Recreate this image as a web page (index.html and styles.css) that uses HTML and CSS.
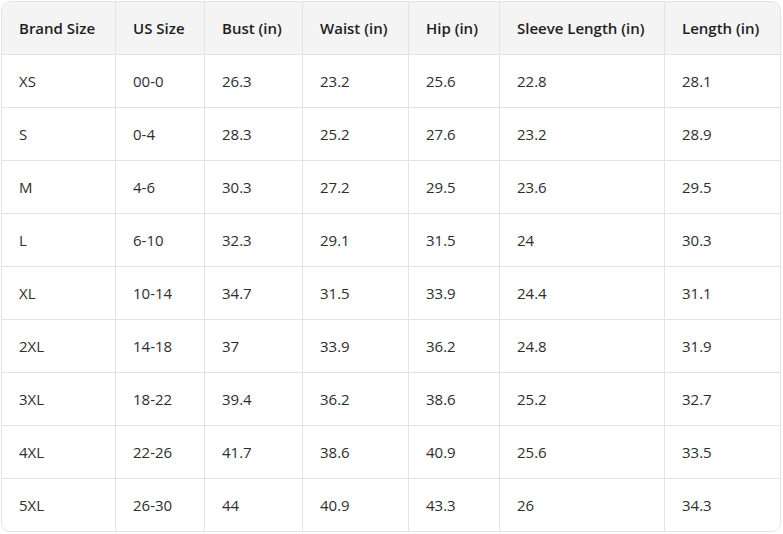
FILE: index.html
```html
<!DOCTYPE html>
<html>
<head>
<meta charset="utf-8">
<link rel="stylesheet" href="styles.css">
</head>
<body>
<div class="wrap">
<table class="size-table">
<colgroup>
<col class="c1"><col class="c2"><col class="c3"><col class="c4"><col class="c5"><col class="c6"><col class="c7">
</colgroup>
<thead>
<tr><th>Brand Size</th><th>US Size</th><th>Bust (in)</th><th>Waist (in)</th><th>Hip (in)</th><th>Sleeve Length (in)</th><th>Length (in)</th></tr>
</thead>
<tbody>
<tr><td>XS</td><td>00-0</td><td>26.3</td><td>23.2</td><td>25.6</td><td>22.8</td><td>28.1</td></tr>
<tr><td>S</td><td>0-4</td><td>28.3</td><td>25.2</td><td>27.6</td><td>23.2</td><td>28.9</td></tr>
<tr><td>M</td><td>4-6</td><td>30.3</td><td>27.2</td><td>29.5</td><td>23.6</td><td>29.5</td></tr>
<tr><td>L</td><td>6-10</td><td>32.3</td><td>29.1</td><td>31.5</td><td>24</td><td>30.3</td></tr>
<tr><td>XL</td><td>10-14</td><td>34.7</td><td>31.5</td><td>33.9</td><td>24.4</td><td>31.1</td></tr>
<tr><td>2XL</td><td>14-18</td><td>37</td><td>33.9</td><td>36.2</td><td>24.8</td><td>31.9</td></tr>
<tr><td>3XL</td><td>18-22</td><td>39.4</td><td>36.2</td><td>38.6</td><td>25.2</td><td>32.7</td></tr>
<tr><td>4XL</td><td>22-26</td><td>41.7</td><td>38.6</td><td>40.9</td><td>25.6</td><td>33.5</td></tr>
<tr><td>5XL</td><td>26-30</td><td>44</td><td>40.9</td><td>43.3</td><td>26</td><td>34.3</td></tr>
</tbody>
</table>
</div>
</body>
</html>
```
FILE: styles.css
```css
html, body {
  margin: 0;
  padding: 0;
  background: #ffffff;
}
body {
  padding: 1px 0 0 1px;
  font-family: "Open Sans", "Noto Sans", sans-serif;
  color: #2e2e2e;
}
.wrap {
  width: 780px;
  box-sizing: border-box;
  border: 1px solid #e3e3e3;
  border-radius: 9px;
  overflow: hidden;
}
.size-table {
  width: 778px;
  border-collapse: separate;
  border-spacing: 0;
  table-layout: fixed;
}
.c1 { width: 114px; }
.c2 { width: 89px; }
.c3 { width: 98px; }
.c4 { width: 106px; }
.c5 { width: 91px; }
.c6 { width: 165px; }
.c7 { width: 115px; }
th, td {
  box-sizing: border-box;
  height: 53px;
  padding: 0 0 0 17px;
  text-align: left;
  font-size: 15px;
  border-right: 1px solid #e3e3e3;
  border-bottom: 1px solid #e3e3e3;
  white-space: nowrap;
  vertical-align: middle;
}
th:last-child, td:last-child {
  border-right: none;
}
tbody tr:last-child td {
  border-bottom: none;
  height: 52px;
}
th {
  background: #f4f4f4;
  font-weight: 600;
  color: #1e1e1e;
}
td {
  font-weight: 400;
}
```
